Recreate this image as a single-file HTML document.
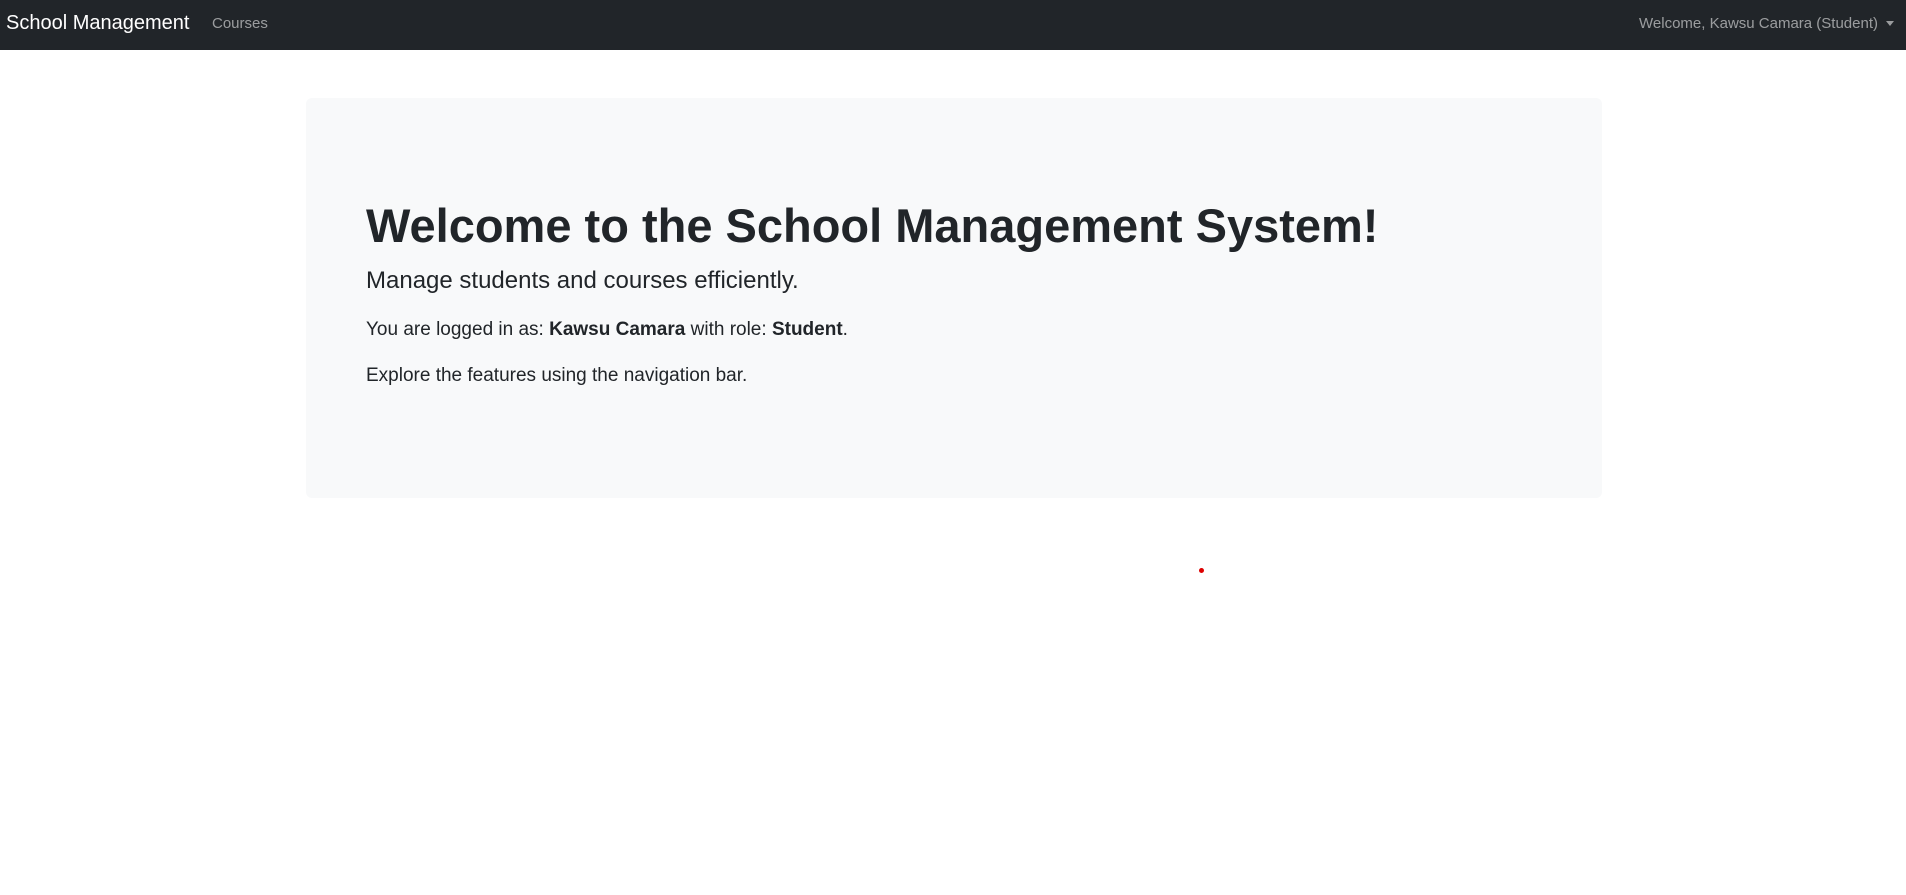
<!DOCTYPE html>
<html><head><style>
*{margin:0;padding:0;box-sizing:border-box}
body{width:1906px;height:895px;background:#fff;font-family:"Liberation Sans",sans-serif;color:#212529;position:relative;overflow:hidden}
.nav{height:50px;background:#212529;position:relative}
.brand{position:absolute;left:6px;top:12px;font-size:20px;color:#fff;line-height:22px}
.link{position:absolute;left:212px;top:15px;font-size:15px;color:rgba(255,255,255,.55);line-height:18px}
.user{position:absolute;right:28px;top:15px;font-size:15px;color:rgba(255,255,255,.55);line-height:18px}
.caret{position:absolute;right:12px;top:21px;width:0;height:0;border-left:4px solid transparent;border-right:4px solid transparent;border-top:5px solid rgba(255,255,255,.55)}
.jumbo{position:absolute;left:306px;top:98px;width:1296px;height:400px;background:#f8f9fa;border-radius:6px}
.t{position:absolute;left:60px;white-space:nowrap}
h1{font-size:47px;font-weight:bold;top:100px;line-height:56px}
.lead{font-size:24px;top:169px;line-height:28px}
.p1{font-size:19px;top:221px;line-height:22px}
.p2{font-size:19px;top:267px;line-height:22px}
.dot{position:absolute;left:1199px;top:568px;width:5px;height:5px;border-radius:50%;background:#d00}
</style></head><body>
<div class="nav"><span class="brand">School Management</span><span class="link">Courses</span><span class="user">Welcome, Kawsu Camara (Student)</span><span class="caret"></span></div>
<div class="jumbo">
<h1 class="t">Welcome to the School Management System!</h1>
<div class="t lead">Manage students and courses efficiently.</div>
<div class="t p1">You are logged in as: <b>Kawsu Camara</b> with role: <b>Student</b>.</div>
<div class="t p2">Explore the features using the navigation bar.</div>
</div>
<div class="dot"></div>
</body></html>
